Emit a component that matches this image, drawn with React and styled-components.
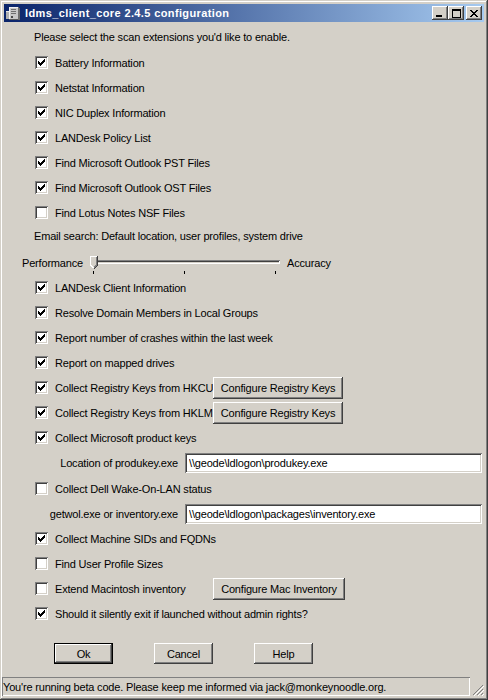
import styled, { createGlobalStyle } from 'styled-components'

const GlobalStyle = createGlobalStyle`
  html, body {
    margin: 0;
    padding: 0;
    background: #D4D0C8;
  }
  * { box-sizing: border-box; }
`

const face = '#D4D0C8'

export default function App() {
  return (
    <>
      <GlobalStyle />
      <Window>
        <TitleBar>
          <WinIcon />
          <TitleText>ldms_client_core 2.4.5 configuration</TitleText>
          <CaptionButtons>
            <CapBtn><svg width="8" height="7" viewBox="0 0 8 7" shapeRendering="crispEdges"><rect x="0" y="5" width="6" height="2" fill="#000" /></svg></CapBtn>
            <CapBtn><svg width="9" height="9" viewBox="0 0 9 9" shapeRendering="crispEdges"><path d="M0.5 0.5h8v8h-8z M0.5 1.5h8" stroke="#000" fill="none" /></svg></CapBtn>
            <CapBtn $gap><svg width="8" height="7" viewBox="0 0 8 7" shapeRendering="crispEdges"><path d="M0 0h2v1h-2z M6 0h2v1h-2z M1 1h2v1h-2z M5 1h2v1h-2z M2 2h4v1h-4z M3 3h2v1h-2z M2 4h4v1h-4z M1 5h2v1h-2z M5 5h2v1h-2z M0 6h2v1h-2z M6 6h2v1h-2z" fill="#000" /></svg></CapBtn>
          </CaptionButtons>
        </TitleBar>

        <Body>
          <Intro>Please select the scan extensions you'd like to enable.</Intro>
          <Check checked label="Battery Information" />
          <Check checked label="Netstat Information" />
          <Check checked label="NIC Duplex Information" />
          <Check checked label="LANDesk Policy List" />
          <Check checked label="Find Microsoft Outlook PST Files" />
          <Check checked label="Find Microsoft Outlook OST Files" />
          <Check label="Find Lotus Notes NSF Files" />
          <Note>Email search: Default location, user profiles, system drive</Note>

          <SliderRow>
            <SliderLabel>Performance</SliderLabel>
            <Slider>
              <Track />
              <Thumb>
                <svg width="8" height="13" viewBox="0 0 8 13" shapeRendering="crispEdges">
                  <path d="M0 0h8v9l-4 4l-4 -4z" fill={face} />
                  <path d="M0.5 9V0.5h6.5" stroke="#fff" fill="none" />
                  <path d="M7.5 0v9l-3.5 3.5" stroke="#404040" fill="none" />
                  <path d="M6.5 1v8l-2.5 2.5" stroke="#808080" fill="none" />
                  <path d="M0.5 9l3 3" stroke="#fff" fill="none" />
                </svg>
              </Thumb>
              <Ticks>
                <Tick /><Tick /><Tick />
              </Ticks>
            </Slider>
            <SliderLabel>Accuracy</SliderLabel>
          </SliderRow>

          <Check checked label="LANDesk Client Information" />
          <Check checked label="Resolve Domain Members in Local Groups" />
          <Check checked label="Report number of crashes within the last week" />
          <Check checked label="Report on mapped drives" />
          <Check checked label="Collect Registry Keys from HKCU" fixed>
            <Button $w={130} $h={22}>Configure Registry Keys</Button>
          </Check>
          <Check checked label="Collect Registry Keys from HKLM" fixed>
            <Button $w={130} $h={22}>Configure Registry Keys</Button>
          </Check>
          <Check checked label="Collect Microsoft product keys" />
          <FieldRow $h={26}>
            <FieldLabel>Location of produkey.exe</FieldLabel>
            <Input defaultValue="\\geode\ldlogon\produkey.exe" />
          </FieldRow>
          <Check label="Collect Dell Wake-On-LAN status" />
          <FieldRow $h={25}>
            <FieldLabel>getwol.exe or inventory.exe</FieldLabel>
            <Input defaultValue="\\geode\ldlogon\packages\inventory.exe" />
          </FieldRow>
          <Check checked label="Collect Machine SIDs and FQDNs" />
          <Check label="Find User Profile Sizes" />
          <Check label="Extend Macintosh inventory" fixed>
            <Button $w={132} $h={22}>Configure Mac Inventory</Button>
          </Check>
          <Check checked label="Should it silently exit if launched without admin rights?" />

          <Actions>
            <Button $w={59} $h={21} $default>Ok</Button>
            <Button $w={59} $h={21}>Cancel</Button>
            <Button $w={59} $h={21}>Help</Button>
          </Actions>
        </Body>

        <StatusBar>
          <StatusField>You're running beta code. Please keep me informed via jack@monkeynoodle.org.</StatusField>
          <Grip>
            <svg width="12" height="12" viewBox="0 0 12 12" shapeRendering="crispEdges">
              <path d="M11 1L1 11 M11 5L5 11 M11 9L9 11" stroke="#808080" strokeWidth="1.4" />
              <path d="M12 2L2 12 M12 6L6 12 M12 10L10 12" stroke="#fff" strokeWidth="1" />
            </svg>
          </Grip>
        </StatusBar>
      </Window>
    </>
  )
}

function Check({ checked, label, fixed, children }) {
  return (
    <CheckRow>
      <Box>
        {checked && (
          <svg width="7" height="7" viewBox="0 0 7 7" shapeRendering="crispEdges">
            <path d="M6 0h1v3h-1z M5 1h1v3h-1z M4 2h1v3h-1z M3 3h1v3h-1z M2 4h1v3h-1z M1 3h1v3h-1z M0 2h1v3h-1z" fill="#000" />
          </svg>
        )}
      </Box>
      <CheckLabel $fixed={fixed}>{label}</CheckLabel>
      {children}
    </CheckRow>
  )
}

function WinIcon() {
  return (
    <IconWrap>
      <svg width="16" height="16" viewBox="0 0 16 16" shapeRendering="crispEdges">
        <path d="M3 2h9l2 2v11h-11z" fill="#9a9a9a" />
        <path d="M3 2h9v13h-9z" fill="#c8c8c8" />
        <path d="M12 2l2 2v11h-2z" fill="#6e6e6e" />
        <path d="M3 2h9v1h-9z M3 2h1v13h-1z" fill="#f0f0f0" />
        <path d="M3 14h9v1h-9z" fill="#5a5a5a" />
        <path d="M5 4h5v1h-5z M5 6h5v1h-5z M5 8h5v1h-5z" fill="#707070" />
        <path d="M5 11h2v2h-2z" fill="#4a4a4a" />
        <path d="M0 6h3v8h-3z" fill="#b0b0b0" />
        <path d="M0 6h3v1h-3z" fill="#e8e8e8" />
      </svg>
    </IconWrap>
  )
}

const Window = styled.div`
  width: 488px;
  height: 700px;
  display: flex;
  flex-direction: column;
  padding: 4px;
  background: ${face};
  box-shadow: inset -1px -1px #404040, inset 1px 1px ${face},
    inset -2px -2px #808080, inset 2px 2px #ffffff;
  font-family: "Liberation Sans", Arial, sans-serif;
  font-size: 11px;
  letter-spacing: -0.18px;
  color: #000;
`

const TitleBar = styled.div`
  height: 18px;
  display: flex;
  align-items: center;
  padding: 0 2px;
  gap: 3px;
  background: linear-gradient(to right, #0A246A, #A6CAF0);
`

const IconWrap = styled.span`
  width: 16px;
  height: 16px;
  display: flex;
`

const TitleText = styled.span`
  flex: 1;
  color: #fff;
  font-weight: 700;
  font-size: 11px;
  letter-spacing: 0.38px;
  white-space: nowrap;
`

const CaptionButtons = styled.div`
  display: flex;
`

const CapBtn = styled.span`
  width: 16px;
  height: 14px;
  margin-left: ${p => (p.$gap ? '2px' : '0')};
  display: flex;
  align-items: center;
  justify-content: center;
  background: ${face};
  box-shadow: inset -1px -1px #404040, inset 1px 1px #ffffff,
    inset -2px -2px #808080;
`

const Body = styled.div`
  display: flex;
  flex-direction: column;
  padding-left: 30px;
`

const Intro = styled.div`
  height: 28px;
  display: flex;
  align-items: center;
  padding-top: 1px;
`

const Note = styled.div`
  height: 22px;
  display: flex;
  align-items: center;
`

const CheckRow = styled.div`
  height: 25px;
  display: flex;
  align-items: center;
  padding-left: 1px;
`

const Box = styled.span`
  width: 13px;
  height: 13px;
  flex: none;
  display: flex;
  align-items: center;
  justify-content: center;
  background: #fff;
  box-shadow: inset 1px 1px #808080, inset -1px -1px #ffffff,
    inset 2px 2px #404040, inset -2px -2px ${face};
`

const CheckLabel = styled.span`
  margin-left: 7px;
  white-space: nowrap;
  width: ${p => (p.$fixed ? '158px' : 'auto')};
`

const SliderRow = styled.div`
  height: 28px;
  display: flex;
  align-items: flex-start;
  padding-top: 9px;
  margin-left: -12px;
`

const SliderLabel = styled.span`
  line-height: 14px;
`

const Slider = styled.div`
  position: relative;
  width: 194px;
  height: 19px;
  margin: 0 5px 0 5px;
`

const Track = styled.div`
  position: absolute;
  left: 5px;
  right: 2px;
  top: 4px;
  height: 4px;
  background: ${face};
  box-shadow: inset 1px 1px #808080, inset -1px -1px #ffffff,
    inset 2px 2px #404040;
`

const Thumb = styled.div`
  position: absolute;
  left: 2px;
  top: 0;
  display: flex;
`

const Ticks = styled.div`
  position: absolute;
  left: 5px;
  width: 183px;
  top: 15px;
  display: flex;
  justify-content: space-between;
`

const Tick = styled.span`
  width: 1px;
  height: 3px;
  background: #000;
`

const FieldRow = styled.div`
  height: ${p => p.$h}px;
  display: flex;
  align-items: center;
  padding-left: 1px;
`

const FieldLabel = styled.span`
  width: 143px;
  text-align: right;
  white-space: nowrap;
`

const Input = styled.input`
  width: 297px;
  height: 20px;
  margin-left: 7px;
  border: none;
  outline: none;
  padding: 0 4px;
  background: #fff;
  font-family: "Liberation Sans", Arial, sans-serif;
  font-size: 11px;
  letter-spacing: -0.18px;
  color: #000;
  box-shadow: inset 1px 1px #808080, inset -1px -1px #ffffff,
    inset 2px 2px #404040, inset -2px -2px ${face};
`

const Button = styled.button`
  width: ${p => p.$w}px;
  height: ${p => p.$h}px;
  flex: none;
  padding: 0;
  border: ${p => (p.$default ? '1px solid #000' : 'none')};
  background: ${face};
  font-family: "Liberation Sans", Arial, sans-serif;
  font-size: 11px;
  letter-spacing: -0.18px;
  color: #000;
  box-shadow: inset -1px -1px #404040, inset 1px 1px #ffffff,
    inset -2px -2px #808080;
`

const Actions = styled.div`
  display: flex;
  gap: 41px;
  margin-top: 17px;
  padding-left: 20px;
`

const StatusBar = styled.div`
  margin-top: auto;
  margin-left: -2px;
  display: flex;
  align-items: stretch;
  height: 19px;
`

const StatusField = styled.div`
  flex: 1;
  display: flex;
  align-items: center;
  padding: 0 1px;
  white-space: nowrap;
  overflow: hidden;
  box-shadow: inset 1px 1px #808080, inset -1px -1px #ffffff;
`

const Grip = styled.div`
  width: 14px;
  display: flex;
  align-items: flex-end;
  justify-content: flex-end;
`
